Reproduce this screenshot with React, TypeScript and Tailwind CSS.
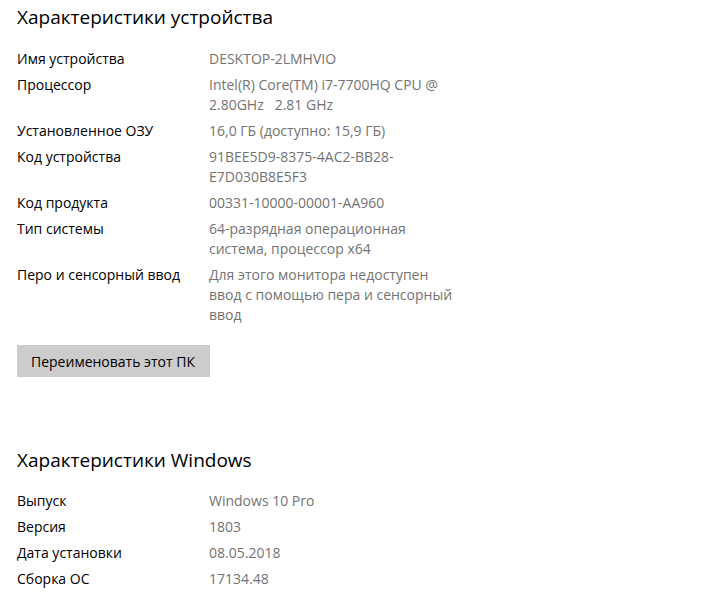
const device: [string, string[]][] = [
  ["Имя устройства", ["DESKTOP-2LMHVIO"]],
  ["Процессор", ["Intel(R) Core(TM) i7-7700HQ CPU @", "2.80GHz   2.81 GHz"]],
  ["Установленное ОЗУ", ["16,0 ГБ (доступно: 15,9 ГБ)"]],
  ["Код устройства", ["91BEE5D9-8375-4AC2-BB28-", "E7D030B8E5F3"]],
  ["Код продукта", ["00331-10000-00001-AA960"]],
  ["Тип системы", ["64-разрядная операционная", "система, процессор x64"]],
  ["Перо и сенсорный ввод", ["Для этого монитора недоступен", "ввод с помощью пера и сенсорный", "ввод"]],
];

const windows: [string, string[]][] = [
  ["Выпуск", ["Windows 10 Pro"]],
  ["Версия", ["1803"]],
  ["Дата установки", ["08.05.2018"]],
  ["Сборка ОС", ["17134.48"]],
];

function Rows({ items }: { items: [string, string[]][] }) {
  return (
    <div className="flex flex-col gap-[6px]">
      {items.map(([label, value]) => (
        <div key={label} className="flex text-[14px] leading-[20px]">
          <div className="w-[192px] shrink-0 text-black">{label}</div>
          <div className="text-[#737373] whitespace-pre">
            {value.map((line) => (
              <div key={line}>{line}</div>
            ))}
          </div>
        </div>
      ))}
    </div>
  );
}

export default function App() {
  return (
    <div
      className="min-h-[600px] bg-white pl-[17px] pt-[3px]"
      style={{ fontFamily: '"Segoe UI", "Open Sans", sans-serif' }}
    >
      <h1 className="text-[19px] leading-[28px] text-black">Характеристики устройства</h1>
      <div className="mt-[18px]">
        <Rows items={device} />
      </div>
      <button className="mt-[20px] h-[32px] w-[193px] bg-[#cccccc] pl-[14px] text-left text-[14px] text-black">
        Переименовать этот ПК
      </button>
      <h2 className="mt-[69px] text-[19px] leading-[28px] text-black">Характеристики Windows</h2>
      <div className="mt-[17px]">
        <Rows items={windows} />
      </div>
    </div>
  );
}
